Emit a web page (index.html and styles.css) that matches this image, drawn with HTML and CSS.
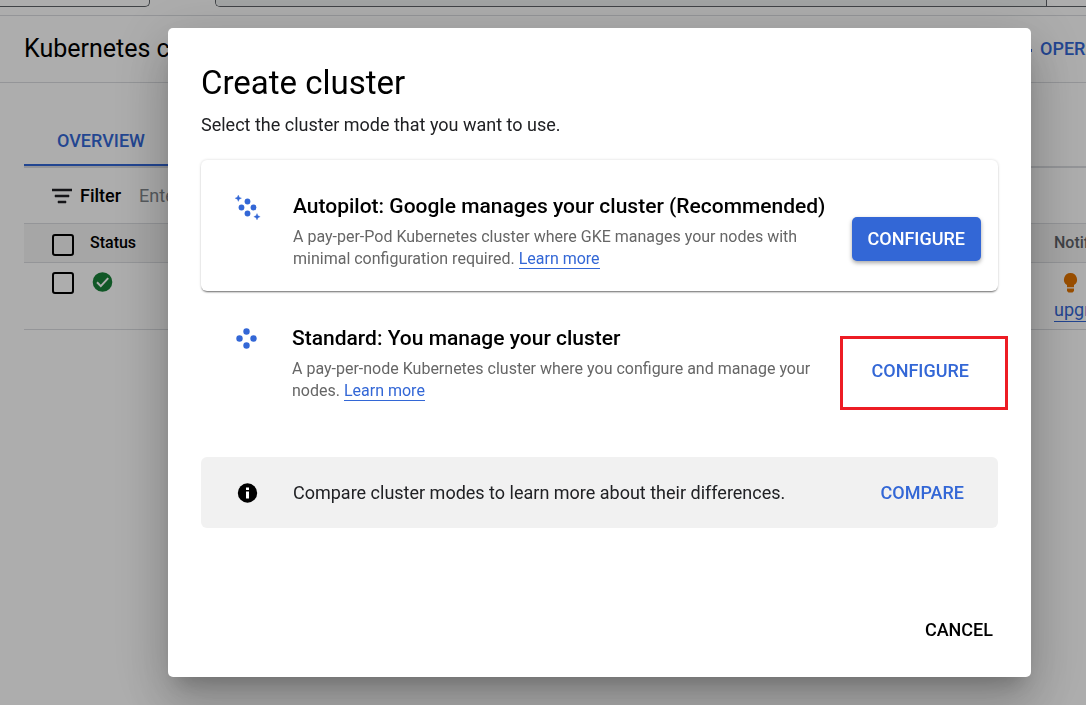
FILE: index.html
```html
<!DOCTYPE html>
<html lang="en">
<head>
<meta charset="utf-8">
<title>Kubernetes clusters</title>
<link rel="stylesheet" href="styles.css">
</head>
<body>
<div class="page">
  <div class="topbar">
    <div class="project-box"></div>
    <div class="search-box"><div class="search-main"></div><div class="search-end"></div></div>
  </div>
  <header class="page-header">
    <h1 class="page-title">Kubernetes clusters</h1>
    <button class="operations" type="button">
      <svg width="16" height="16" viewBox="0 0 16 16" aria-hidden="true"><path d="M0 8h16v3H0z" fill="currentColor"/></svg>
      <span>OPERATIONS</span>
    </button>
  </header>
  <main class="content">
    <nav class="tabs"><a class="tab" href="#overview">OVERVIEW</a></nav>
    <div class="filter-row">
      <svg width="20" height="16" viewBox="0 0 20 16" aria-hidden="true"><path d="M0 1h20v2H0zM3 7h14v2H3zM6 13h8v2H6z" fill="#202124" stroke="#202124" stroke-width=".5"/></svg>
      <label class="filter-label" for="filter">Filter</label>
      <input class="filter-input" id="filter" type="text" placeholder="Enter property name or value">
    </div>
    <table class="clusters">
      <thead>
        <tr>
          <th class="col-check"><input class="check" type="checkbox" aria-label="Select all clusters"></th>
          <th class="col-status">Status</th>
          <th class="col-notes">Notifications</th>
        </tr>
      </thead>
      <tbody>
        <tr>
          <td><input class="check" type="checkbox" aria-label="Select cluster"></td>
          <td><svg class="ok" width="24" height="20" viewBox="0 0 24 20" aria-hidden="true"><circle cx="12.5" cy="10" r="9.8" fill="#188038"/><path d="M7 10.3l3.8 3.8 7.4-8" fill="none" stroke="#fff" stroke-width="2"/></svg></td>
          <td>
            <svg class="bulb" width="32" height="26" viewBox="0 0 32 26" aria-hidden="true"><path d="M16.500 2a6.500 6.500 0 0 0-3.500 12v2.200h7V14a6.500 6.500 0 0 0-3.500-12zM13 17.500h7V20l-1.500 1.500h-4L13 20z" fill="#e37400"/></svg>
            <a class="link" href="#upgrade">upgrade</a>
          </td>
        </tr>
      </tbody>
    </table>
  </main>
</div>

<div class="overlay">
  <section class="dialog" role="dialog" aria-modal="true" aria-labelledby="dialog-title">
    <h2 class="dialog-title" id="dialog-title">Create cluster</h2>
    <p class="dialog-lead">Select the cluster mode that you want to use.</p>

    <div class="mode mode-card">
      <svg class="mode-icon" width="26" height="26" viewBox="0 0 26 26" aria-hidden="true">
        <g fill="#3367d6"><circle cx="12.500" cy="7.500" r="2.900"/><circle cx="6.500" cy="13.500" r="2.900"/><circle cx="18.500" cy="13.500" r="2.900"/><circle cx="12.500" cy="19.500" r="2.900"/>
        <path d="M3.300 1l1 2.200 2.200 1-2.200 1-1 2.200-1-2.200-2.200-1 2.200-1zM22 19.500l1 2.200 2.200 1-2.200 1-1 2.200-1-2.200-2.200-1 2.200-1z" stroke="#3367d6" stroke-width=".3"/></g>
      </svg>
      <div class="mode-text">
        <h3 class="mode-title">Autopilot: Google manages your cluster (Recommended)</h3>
        <p class="mode-desc">A pay-per-Pod Kubernetes cluster where GKE manages your nodes with minimal configuration required. <a class="link" href="#autopilot">Learn more</a></p>
      </div>
      <button class="btn btn-primary" type="button">CONFIGURE</button>
    </div>

    <div class="mode mode-plain">
      <svg class="mode-icon" width="26" height="26" viewBox="0 0 26 26" aria-hidden="true">
        <g fill="#3367d6"><circle cx="12.500" cy="5.500" r="3.200"/><circle cx="5.500" cy="12.500" r="3.200"/><circle cx="19.500" cy="12.500" r="3.200"/><circle cx="12.500" cy="19.500" r="3.200"/></g>
      </svg>
      <div class="mode-text">
        <h3 class="mode-title">Standard: You manage your cluster</h3>
        <p class="mode-desc">A pay-per-node Kubernetes cluster where you configure and manage your nodes. <a class="link" href="#standard">Learn more</a></p>
      </div>
      <button class="btn btn-text" type="button">CONFIGURE</button>
      <div class="highlight"></div>
    </div>

    <div class="compare">
      <svg class="mode-icon" width="26" height="20" viewBox="0 0 26 20" aria-hidden="true"><circle cx="12.500" cy="10" r="9.700"/><path d="M11 4.500h3v2.500h-3zM11 8.500h3v7h-3z" fill="#fff"/></svg>
      <p class="compare-text">Compare cluster modes to learn more about their differences.</p>
      <button class="btn btn-text" type="button">COMPARE</button>
    </div>

    <footer class="actions"><button class="btn btn-cancel" type="button">CANCEL</button></footer>
  </section>
</div>
</body>
</html>
```

FILE: styles.css
```css
* { box-sizing: border-box; }
body {
  margin: 0;
  height: 100vh;
  overflow: hidden;
  background: #fff;
  color: #000;
  font: 16px/22px Roboto, sans-serif;
}
h1, h2, h3, p { margin: 0; }
button { border: 0; background: none; font: inherit; cursor: pointer; }

.page { height: 100vh; overflow: hidden; }
.topbar {
  display: flex;
  gap: 65px;
  height: 16px;
  padding-bottom: 8px;
  border-bottom: 1px solid #dadce0;
}
.project-box { width: 150px; border: 1px solid #5f6368; border-width: 0 1px 1px 0; border-radius: 0 0 5px 0; }
.search-box { display: flex; flex: 1; border: 1px solid #5f6368; border-width: 0 0 1px 1px; border-radius: 0 0 0 5px; }
.search-main { flex: 1; background: #f1f3f4; border-radius: 0 0 0 4px; }
.search-end { width: 40px; border-left: 1px solid #5f6368; }

.page-header {
  display: flex;
  align-items: center;
  justify-content: space-between;
  height: 67px;
  padding-left: 24px;
  border-bottom: 1px solid #dadce0;
}
.page-title { font-size: 25px; line-height: 32px; font-weight: 400; }
.operations {
  display: flex;
  align-items: center;
  gap: 8px;
  width: 70px;
  padding: 0;
  color: #3367d6;
  font-size: 18px;
  font-weight: 500;
}
.operations svg { flex: none; }

.content { padding-left: 24px; }
.tabs { display: flex; height: 85px; align-items: flex-end; border-bottom: 2px solid #dadce0; }
.tab {
  width: 154px;
  padding-bottom: 12px;
  border-bottom: 2px solid #3367d6;
  color: #3367d6;
  font-size: 18px;
  font-weight: 500;
  text-align: center;
  text-decoration: none;
}
.filter-row { display: flex; align-items: center; height: 55px; padding-left: 28px; }
.filter-label { margin-left: 8px; font-size: 18px; font-weight: 500; }
.filter-input { flex: 1; margin-left: 16px; border: 0; font: 18px/22px Roboto, sans-serif; }
.filter-input::placeholder { color: #80868b; }

.clusters { width: 100%; table-layout: fixed; border-collapse: collapse; border-top: 1px solid #dadce0; overflow: hidden; }
.clusters tr { border-bottom: 1px solid #dadce0; }
.clusters th { height: 39px; padding: 0; background: #f5f5f5; font-weight: 500; text-align: left; }
.clusters td { height: 67px; padding: 8px 0 0; vertical-align: top; }
.col-check { width: 66px; }
.col-notes { width: 32px; overflow: hidden; color: #5f6368; }
.check {
  display: block;
  appearance: none;
  width: 22px;
  height: 22px;
  margin: 0 0 0 28px;
  border: 2px solid #000;
  border-radius: 3px;
}
.clusters th .check { margin-top: 3px; }
.clusters td .check { margin-top: 1px; }
.ok, .bulb { display: block; }
.ok { margin-top: 1px; }
.clusters td .link { display: inline-block; margin-top: 2px; font-size: 18px; line-height: 22px; }
.link { color: #3367d6; text-decoration: none; border-bottom: 1px solid #3367d6; }

.overlay {
  position: fixed;
  inset: 0;
  display: flex;
  align-items: stretch;
  padding: 28px 55px 28px 168px;
  background: rgba(0, 0, 0, .32);
}
.dialog {
  display: flex;
  flex: 1;
  flex-direction: column;
  padding: 33px 33px 25px;
  border-radius: 5px;
  background: #fff;
  box-shadow: 0 14px 19px -9px rgba(0, 0, 0, .2), 0 30px 48px 4px rgba(0, 0, 0, .14), 0 11px 58px 10px rgba(0, 0, 0, .12);
}
.dialog-title { font-size: 33px; line-height: 44px; font-weight: 400; }
.dialog-lead { margin-top: 9px; font-size: 18px; color: #202124; }

.mode { display: flex; padding: 34px 17px 21px 34px; }
.mode-card {
  margin-top: 24px;
  border-radius: 6px;
  box-shadow: 0 2px 2px -1px rgba(0, 0, 0, .55), 0 0 3px rgba(0, 0, 0, .16);
}
.mode-plain { position: relative; padding: 35px 13px 21px 33px; }
.mode-icon { flex: none; margin-right: 32px; }
.mode-text { flex: 1; padding-right: 12px; }
.mode-title { font-size: 21px; line-height: 24px; font-weight: 500; }
.mode-desc { margin-top: 8px; font-size: 16px; color: #666; }
.btn { flex: none; height: 44px; padding: 0 16px; border-radius: 5px; font-size: 18px; line-height: 22px; font-weight: 500; }
.btn-primary { margin-top: 23px; background: #3367d6; color: #fff; box-shadow: 0 2px 4px rgba(0, 0, 0, .35); }
.btn-text { color: #3367d6; }
.mode-plain .btn { margin-top: 23px; }
.highlight { position: absolute; top: 45px; right: -10px; width: 168px; height: 74px; border: 3px solid #ed1c24; pointer-events: none; }

.compare {
  display: flex;
  align-items: center;
  height: 71px;
  margin-top: 34px;
  padding: 0 18px 0 34px;
  border-radius: 6px;
  background: #f1f1f1;
}
.compare-text { flex: 1; font-size: 18px; color: #202124; }
.actions { display: flex; justify-content: flex-end; margin-top: auto; }
.btn-cancel { padding: 0 5px; color: #000; }
```
